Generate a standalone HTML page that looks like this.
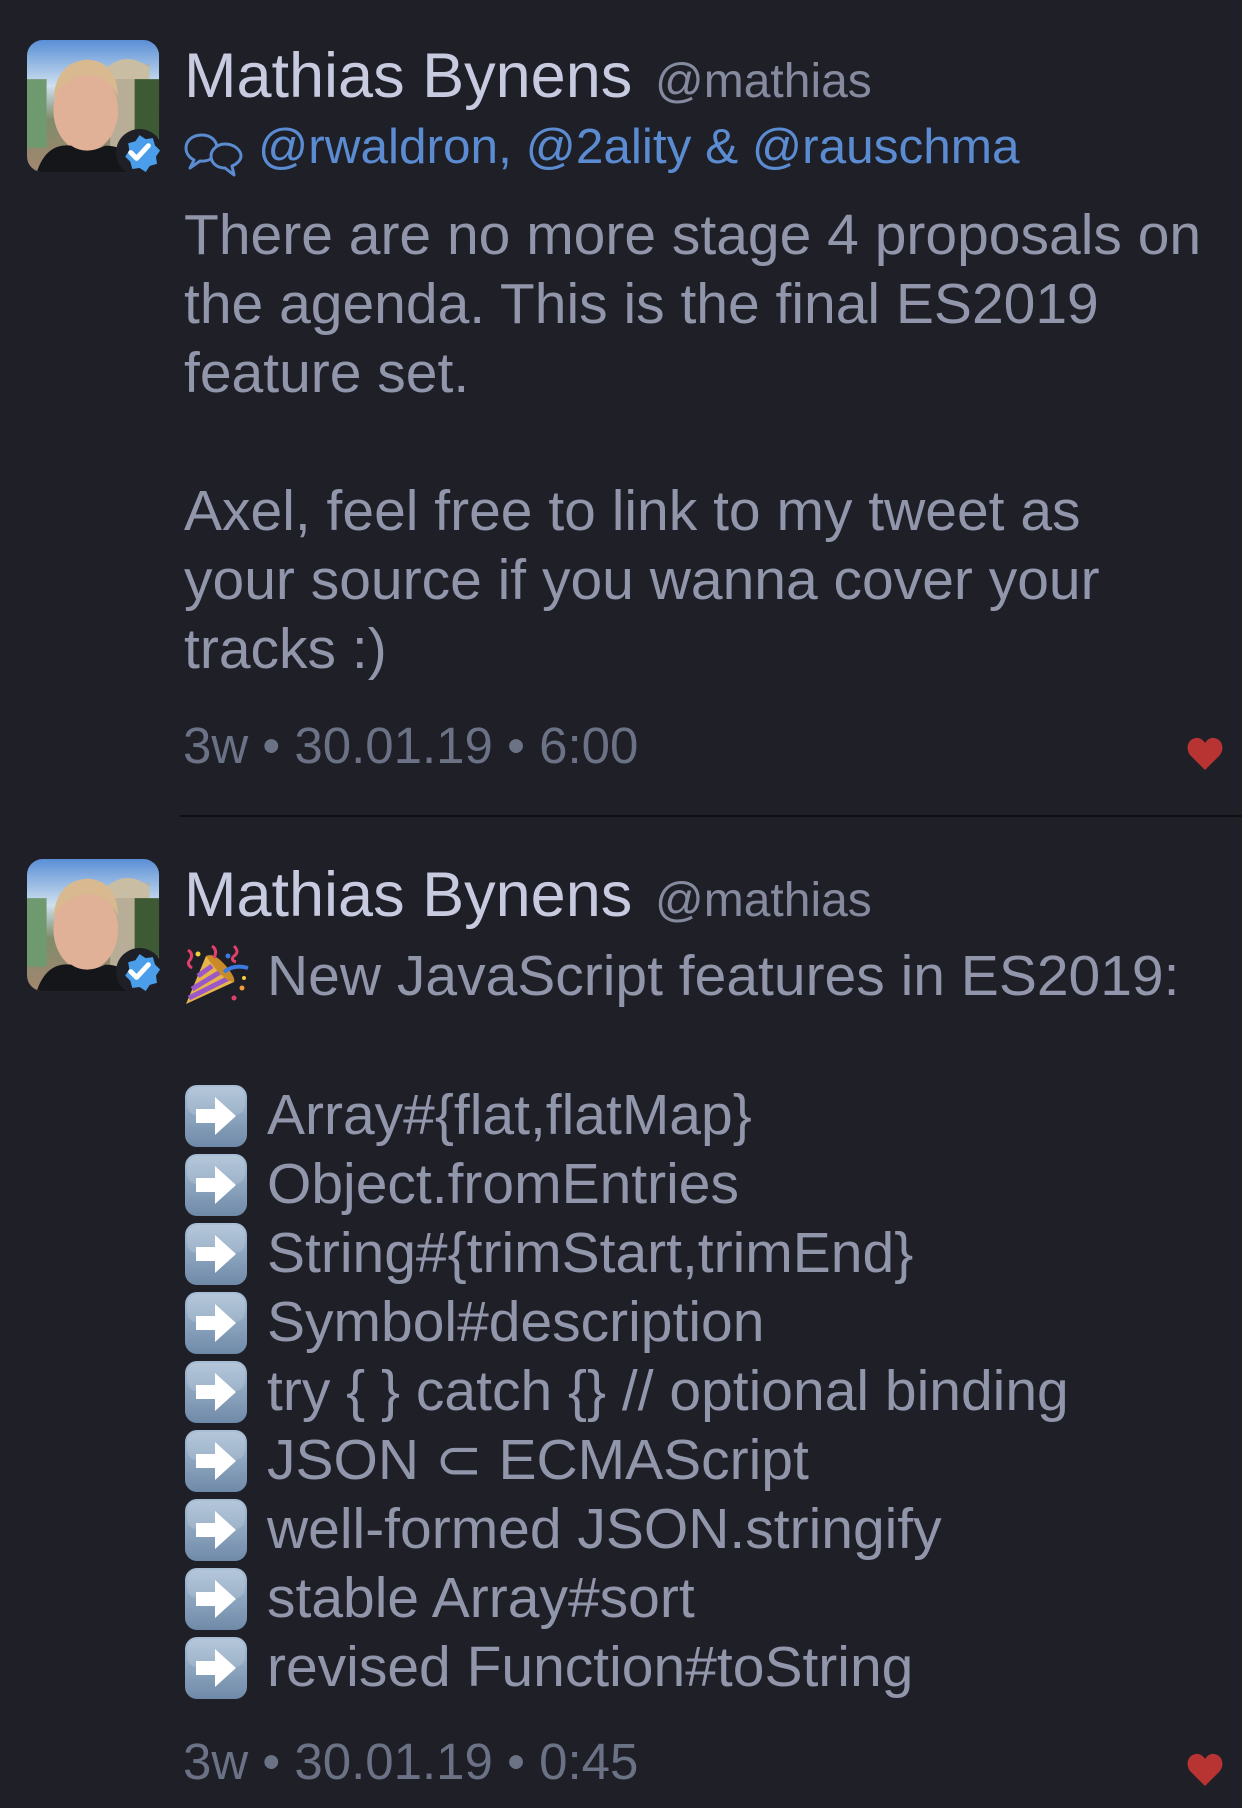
<!DOCTYPE html>
<html><head><meta charset="utf-8"><style>
html,body{margin:0;padding:0;background:#1e1f27;}
body{width:1242px;height:1808px;position:relative;overflow:hidden;font-family:"Liberation Sans","DejaVu Sans",sans-serif;}
.a{position:absolute;white-space:nowrap;line-height:1;}
.name{font-size:63px;color:#c8cbe0;}
.handle{font-size:48px;color:#858a9e;}
.body{position:absolute;left:184px;font-size:57px;line-height:69px;color:#9296ab;white-space:nowrap;}
.ts{font-size:51px;color:#6c7285;left:183px;}
.av{position:absolute;left:27px;width:137px;height:137px;}
.ic{position:absolute;left:184px;width:64px;height:64px;}
</style></head><body>

<svg width="0" height="0" style="position:absolute">
<defs>
<linearGradient id="sky" x1="0" y1="0" x2="0" y2="1"><stop offset="0" stop-color="#5a8fd6"/><stop offset="0.35" stop-color="#cfe0ee"/><stop offset="0.6" stop-color="#7f8c6a"/><stop offset="1" stop-color="#a48670"/></linearGradient>
<linearGradient id="arr" x1="0" y1="0" x2="0" y2="1"><stop offset="0" stop-color="#a9bfd6"/><stop offset="1" stop-color="#6f8aa8"/></linearGradient>
<clipPath id="avc"><rect width="135" height="135" rx="16"/></clipPath>
<g id="avatar">
<g clip-path="url(#avc)">
<rect width="135" height="135" fill="url(#sky)"/>
<rect x="85" y="25" width="40" height="95" fill="#b8ad96"/>
<path d="M80 30 Q100 10 125 28 L125 40 L80 40Z" fill="#c9bda4"/>
<rect x="110" y="40" width="25" height="60" fill="#3d5a34"/>
<rect x="0" y="40" width="20" height="70" fill="#6f9a70"/>
<ellipse cx="60" cy="72" rx="33" ry="42" fill="#e0b197"/>
<path d="M27 60 Q30 22 62 20 Q92 22 93 58 Q85 38 62 36 Q38 38 27 60Z" fill="#d9b98f"/>
<path d="M10 135 Q20 105 45 108 Q60 118 80 108 Q105 108 115 135Z" fill="#15161a"/>
</g>
<circle cx="115" cy="115" r="24" fill="#1e1f27"/>
<path d="M115 93 l6 4 7 -1 2 7 5 5 -4 6 1 7 -7 2 -4 6 -6 -4 -7 1 -2 -7 -5 -5 4 -6 -1 -7 7 -2z" fill="#4a9eea" transform="translate(115 115) scale(1.05) translate(-115 -110)"/>
<path d="M106 115 l6 6 12 -13" fill="none" stroke="#fff" stroke-width="5" stroke-linecap="round" stroke-linejoin="round"/>
</g>
<g id="arrow">
<rect x="1" y="1" width="62" height="62" rx="12" fill="url(#arr)"/>
<rect x="3" y="3" width="58" height="28" rx="10" fill="#fff" opacity="0.15"/>
<path d="M12 25 H31 V13 L52 32 L31 51 V39 H12Z" fill="#fff"/>
</g>
</defs>
</svg>

<!-- Tweet 1 -->
<svg class="av" style="top:40px" viewBox="0 0 140 140"><use href="#avatar"/></svg>
<div class="a name" style="left:184px;top:45px">Mathias Bynens</div>
<div class="a handle" style="left:655px;top:58px">@mathias</div>
<svg style="position:absolute;left:184px;top:131px" width="60" height="46" viewBox="0 0 60 46">
<path d="M18 4 C8 4 2 10 2 17 C2 23 6 27 10 29 L6 37 L16 30 C26 31 33 25 33 17 C33 10 27 4 18 4Z" fill="none" stroke="#5b8bd0" stroke-width="3" stroke-linejoin="round"/>
<path d="M41 13 C33 13 27 19 27 25 C27 32 33 37 41 37 L50 44 L48 35 C53 33 57 29 57 25 C57 19 50 13 41 13Z" fill="#1e1f27" stroke="#5b8bd0" stroke-width="3" stroke-linejoin="round"/>
</svg>
<div class="a" style="left:258px;top:122px;font-size:49.5px;color:#5b8bd0">@rwaldron, @2ality &amp; @rauschma</div>
<div class="body" style="top:201px">There are no more stage 4 proposals on<br>the agenda. This is the final ES2019<br>feature set.<br><br>Axel, feel free to link to my tweet as<br>your source if you wanna cover your<br>tracks :)</div>
<div class="a ts" style="top:720px">3w • 30.01.19 • 6:00</div>
<svg style="position:absolute;left:1187px;top:737px" width="36" height="33" viewBox="0 0 36 33"><path d="M18 33 L4 19 C-2 13 0 2 9 1 C13 0.5 16 3 18 6 C20 3 23 0.5 27 1 C36 2 38 13 32 19Z" fill="#b83433"/></svg>
<div style="position:absolute;left:180px;top:815px;width:1062px;height:2px;background:#0f1014"></div>

<!-- Tweet 2 -->
<svg class="av" style="top:859px" viewBox="0 0 140 140"><use href="#avatar"/></svg>
<div class="a name" style="left:184px;top:864px">Mathias Bynens</div>
<div class="a handle" style="left:655px;top:877px">@mathias</div>
<svg style="position:absolute;left:184px;top:942px" width="66" height="66" viewBox="0 0 66 66">
<path d="M2 62 L22 14 L50 40Z" fill="#e8b54a"/>
<path d="M8 47 L38 29 M14 34 L28 24 M5 56 L45 36" stroke="#9b59c8" stroke-width="5"/>
<path d="M22 14 Q30 10 42 24 Q52 36 50 40 Q40 40 22 14Z" fill="#c98a2a"/>
<path d="M40 30 Q50 22 64 26" stroke="#3b7be0" stroke-width="4" fill="none"/>
<path d="M28 4 Q34 8 30 16 M50 4 Q56 10 50 14 Q46 18 52 20 M4 8 Q10 12 6 18 Q2 22 8 26" stroke="#e0406a" stroke-width="3" fill="none"/>
<circle cx="14" cy="12" r="2.5" fill="#f3d03b"/><circle cx="44" cy="14" r="2.5" fill="#3b7be0"/><circle cx="58" cy="46" r="2.5" fill="#f39a3b"/><circle cx="50" cy="56" r="2.5" fill="#e0406a"/><circle cx="60" cy="36" r="2" fill="#f3d03b"/>
</svg>
<div class="body" style="top:942px;left:267px">New JavaScript features in ES2019:</div>
<div class="body" style="top:1081px;left:267px">Array#{flat,flatMap}<br>Object.fromEntries<br>String#{trimStart,trimEnd}<br>Symbol#description<br>try { } catch {} // optional binding<br>JSON ⊂ ECMAScript<br>well-formed JSON.stringify<br>stable Array#sort<br>revised Function#toString</div>
<svg class="ic" style="top:1084px" viewBox="0 0 64 64"><use href="#arrow"/></svg>
<svg class="ic" style="top:1153px" viewBox="0 0 64 64"><use href="#arrow"/></svg>
<svg class="ic" style="top:1222px" viewBox="0 0 64 64"><use href="#arrow"/></svg>
<svg class="ic" style="top:1291px" viewBox="0 0 64 64"><use href="#arrow"/></svg>
<svg class="ic" style="top:1360px" viewBox="0 0 64 64"><use href="#arrow"/></svg>
<svg class="ic" style="top:1429px" viewBox="0 0 64 64"><use href="#arrow"/></svg>
<svg class="ic" style="top:1498px" viewBox="0 0 64 64"><use href="#arrow"/></svg>
<svg class="ic" style="top:1567px" viewBox="0 0 64 64"><use href="#arrow"/></svg>
<svg class="ic" style="top:1636px" viewBox="0 0 64 64"><use href="#arrow"/></svg>
<div class="a ts" style="top:1736px">3w • 30.01.19 • 0:45</div>
<svg style="position:absolute;left:1187px;top:1753px" width="36" height="33" viewBox="0 0 36 33"><path d="M18 33 L4 19 C-2 13 0 2 9 1 C13 0.5 16 3 18 6 C20 3 23 0.5 27 1 C36 2 38 13 32 19Z" fill="#b83433"/></svg>
</body></html>
